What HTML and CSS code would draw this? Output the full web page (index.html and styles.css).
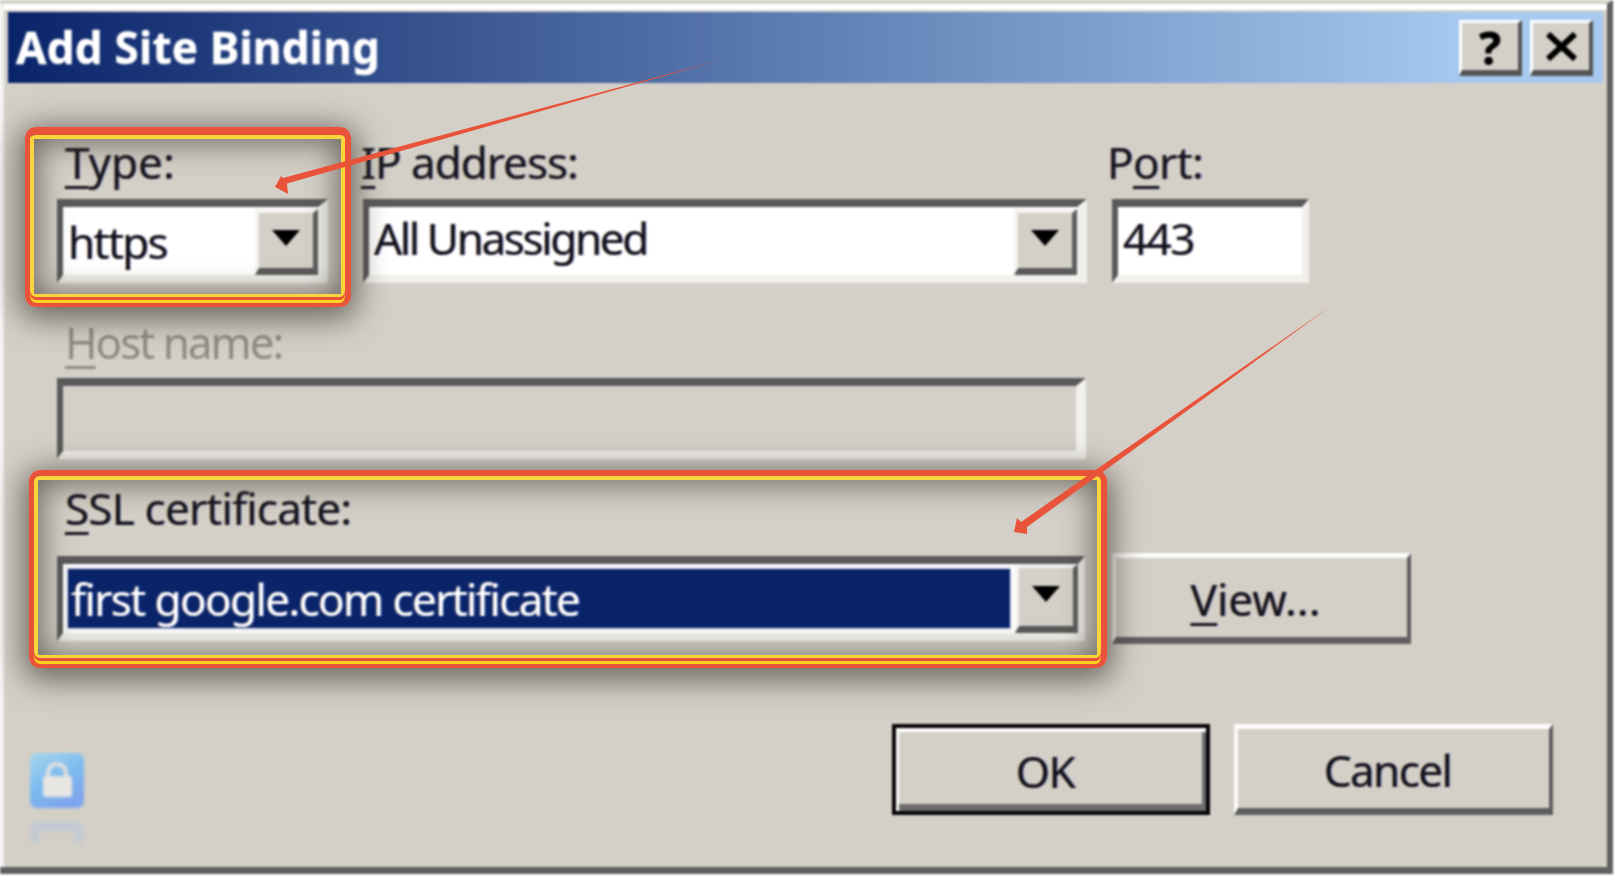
FILE: index.html
```html
<!DOCTYPE html>
<html lang="en">
<head>
<meta charset="utf-8">
<title>Add Site Binding</title>
<link rel="stylesheet" href="styles.css">
</head>
<body>
<div class="screen">
  <div class="dialog">
    <header class="titlebar">
      <h1 class="title">Add Site Binding</h1>
      <div class="caption-buttons">
        <div class="cap-btn cap-help">?</div>
        <div class="cap-btn">
          <svg class="cap-x" viewBox="0 0 33 29"><path d="M3 2 L30 27 M30 2 L3 27"/></svg>
        </div>
      </div>
    </header>
    <main class="form">
      <section class="row-top">
        <div class="field f-type">
          <label class="lbl"><u>T</u>ype:</label>
          <div class="sunken combo">
            <span class="value v-https">https</span>
            <span class="drop"><i class="tri"></i></span>
          </div>
        </div>
        <div class="field f-ip">
          <label class="lbl"><u>I</u>P address:</label>
          <div class="sunken combo">
            <span class="value v-ip">All Unassigned</span>
            <span class="drop"><i class="tri"></i></span>
          </div>
        </div>
        <div class="field f-port">
          <label class="lbl">P<u>o</u>rt:</label>
          <div class="sunken combo port-box"><span class="value">443</span></div>
        </div>
      </section>
      <section class="row-host">
        <label class="lbl lbl-off"><u>H</u>ost name:</label>
        <div class="sunken host-input"></div>
      </section>
      <section class="row-ssl">
        <label class="lbl"><u>S</u>SL certificate:</label>
        <div class="ssl-line">
          <div class="sunken combo ssl-combo">
            <span class="value selected">first google.com certificate</span>
            <span class="drop"><i class="tri"></i></span>
          </div>
          <button class="btn btn-view"><u>V</u>iew...</button>
        </div>
      </section>
      <footer class="row-actions">
        <div class="lock-wrap">
          <svg class="lock" viewBox="0 0 56 57">
            <defs>
              <linearGradient id="lockBg" x1="0" y1="0" x2="0.5" y2="1">
                <stop offset="0" stop-color="#a9d6ec"/>
                <stop offset="0.55" stop-color="#7cbcf0"/>
                <stop offset="1" stop-color="#7ea6ee"/>
              </linearGradient>
            </defs>
            <rect x="1" y="1" width="54" height="55" rx="7" fill="url(#lockBg)"/>
            <path d="M19 26 v-5 a9 9 0 0 1 18 0 v5" fill="none" stroke="#e4e2de" stroke-width="4"/>
            <rect x="14" y="24" width="29" height="21" rx="3" fill="#e8e6e2"/>
          </svg>
          <svg class="lock-shadow" viewBox="0 0 56 24">
            <path d="M2 22 V6 Q2 1 8 1 H48 Q54 1 54 6 V22 H46 V10 H10 V22 Z" fill="#a9bde4"/>
          </svg>
        </div>
        <div class="actions">
          <button class="btn btn-default">OK</button>
          <button class="btn btn-cancel">Cancel</button>
        </div>
      </footer>
    </main>
  </div>
  <div class="mark mark-type"></div>
  <div class="mark mark-ssl"></div>
  <svg class="arrows" viewBox="0 0 1617 880">
    <polygon class="arrow" points="724,59 287,183.5 288,194 275,187 281,176 283,178"/>
    <polygon class="arrow" points="1331,306 1027,527 1027,534 1014,532 1017,518 1021,522"/>
  </svg>
</div>
</body>
</html>
```

FILE: styles.css
```css
* { box-sizing: border-box; }
html, body { margin: 0; padding: 0; }
body { background: #fff; font-family: "Noto Sans", "Open Sans", sans-serif; }

.screen {
  position: relative;
  width: 1617px;
  height: 880px;
  overflow: hidden;
  background: #fff;
}

.dialog {
  width: 1613px;
  height: 874px;
  background: #d4d0c8;
  border-top: 4px solid #d4d0c8;
  border-right: 6px solid #5f5f5f;
  border-bottom: 7px solid #5f5f5f;
  padding: 8px 4px 0 8px;
  box-shadow: inset 5px 0 0 -1px #f2f1ee, inset 0 6px 0 #fff;
  filter: blur(1px);
}

.titlebar {
  height: 71px;
  display: flex;
  justify-content: space-between;
  align-items: flex-start;
  background: linear-gradient(90deg, #0a246a 0%, #a6caf0 92%);
  padding: 9px 10px 0 8px;
}
.title {
  margin: 0;
  color: #fff;
  font-size: 44px;
  font-weight: 700;
  line-height: 52px;
  letter-spacing: 0.25px;
  -webkit-text-stroke: 0.4px #fff;
}
.caption-buttons { display: flex; gap: 8px; margin-top: -1px; }
.cap-btn {
  width: 63px;
  height: 56px;
  display: flex;
  align-items: center;
  justify-content: center;
  background: #d4d0c8;
  border-style: solid;
  border-width: 3px 4px 6px 3px;
  border-color: #fff #555 #555 #fff;
  color: #000;
}
.cap-help { font-size: 46px; font-weight: 800; line-height: 1; }
.cap-x { width: 33px; height: 29px; }
.cap-x path { fill: none; stroke: #000; stroke-width: 6; }

.form { padding: 58px 0 0 49px; color: #000; }

.lbl {
  display: block;
  height: 50px;
  margin-bottom: 8px;
  font-size: 44px;
  line-height: 50px;
  letter-spacing: -0.8px;
  color: #14141e;
  white-space: nowrap;
  text-shadow: -1px 0 rgba(200, 120, 0, .35), 1px 0 rgba(0, 40, 200, .35);
}
.lbl-off { color: #8f8c86; text-shadow: none; margin-left: 8px; letter-spacing: -2px; margin-bottom: 11px; }
.lbl u, .btn u { text-underline-offset: 7px; text-decoration-thickness: 3px; }

.row-top { display: flex; }
.row-top .lbl { line-height: 42px; }
.f-type { width: 271px; margin-right: 35px; }
.f-ip { width: 724px; margin-right: 25px; }
.f-port { width: 197px; }
.f-type .lbl { margin-left: 8px; letter-spacing: 0; }
.f-ip .lbl { margin-left: -2px; letter-spacing: -1px; }
.f-port .lbl { margin-left: -5px; letter-spacing: -0.6px; }

.sunken {
  height: 84px;
  border-style: solid;
  border-width: 8px 10px 8px 6px;
  border-color: #5a5a5a #f1f0ed #f1f0ed #5a5a5a;
  background: #fff;
}
.port-box { border-right-width: 7px; }
.combo { display: flex; align-items: stretch; }
.value {
  flex: 1;
  min-width: 0;
  padding: 0 0 0 5px;
  font-size: 44px;
  line-height: 62px;
  letter-spacing: -1.6px;
  color: #10101c;
  white-space: nowrap;
  text-shadow: -1px 0 rgba(200, 120, 0, .35), 1px 0 rgba(0, 40, 200, .35);
}
.v-https { line-height: 70px; }
.v-ip { letter-spacing: -2.35px; }
.drop {
  flex: none;
  width: 63px;
  margin-top: 2px;
  display: flex;
  align-items: center;
  justify-content: center;
  background: #d4d0c8;
  border-style: solid;
  border-width: 4px 5px 7px 4px;
  border-color: #f4f3f0 #5f5f5f #5a5a5a #f4f3f0;
}
.tri {
  display: block;
  width: 0;
  height: 0;
  border-left: 14px solid transparent;
  border-right: 14px solid transparent;
  border-top: 16px solid #000;
  margin-top: -6px;
}

.row-host { margin-top: 34px; }
.host-input { width: 1029px; height: 81px; background: #d4d0c8; }

.row-ssl { margin-top: 24px; }
.row-ssl .lbl { margin-left: 8px; margin-bottom: 20px; }
.ssl-line { display: flex; align-items: center; gap: 27px; }
.ssl-combo { width: 1028px; height: 85px; border-right-width: 7px; }
.selected {
  flex: 1;
  margin: 5px 5px 5px 5px;
  padding-left: 3px;
  background: #0a246a;
  color: #fff;
  outline: 2px solid #dfe4f2;
  line-height: 61px;
  overflow: hidden;
  text-shadow: -1px 0 rgba(255, 170, 90, .35), 1px 0 rgba(120, 170, 255, .35);
}
.ssl-combo .drop { margin-top: 0; }

.btn {
  display: flex;
  align-items: center;
  justify-content: center;
  padding: 2px 12px 0 0;
  font: inherit;
  font-size: 44px;
  letter-spacing: -1.6px;
  color: #10101c;
  background: #d4d0c8;
  border-style: solid;
  border-width: 5px 4px 7px 4px;
  border-color: #fbfbf9 #5f5f5f #5f5f5f #fbfbf9;
  text-shadow: -1px 0 rgba(200, 120, 0, .35), 1px 0 rgba(0, 40, 200, .35);
}
.btn-view { width: 299px; height: 91px; letter-spacing: 0; }

.row-actions {
  margin: 80px 50px 0 -28px;
  display: flex;
  justify-content: space-between;
  align-items: flex-start;
}
.actions { display: flex; gap: 24px; }
.btn-default, .btn-cancel { width: 318px; height: 91px; }
.btn-cancel { width: 319px; }
.btn-default {
  border: 4px solid #050505;
  box-shadow: inset 3px 4px 0 #fbfbf9, inset -4px -7px 0 #6d6d6d;
}

.lock-wrap { margin-top: 28px; width: 56px; }
.lock { display: block; width: 56px; height: 57px; filter: blur(1px); }
.lock-shadow { display: block; width: 56px; height: 24px; margin-top: 12px; opacity: .4; filter: blur(2px); }

.mark {
  position: absolute;
  border-style: solid;
  border-color: #e8533a;
  border-radius: 11px;
  box-shadow:
    inset 0 -3px 0 #fbd31f,
    inset 0 -6px 0 #e8533a,
    inset 0 0 0 4px #f8d53a,
    inset 0 -9px 0 #f8d53a,
    inset 0 0 30px 8px rgba(60, 55, 45, .68),
    0 6px 30px 6px rgba(60, 55, 45, .68);
  pointer-events: none;
}
.mark-type { left: 25px; top: 127px; width: 326px; height: 180px; border-width: 8px 6px 4px 5px; }
.mark-ssl { left: 29px; top: 470px; width: 1078px; height: 198px; border-width: 6px 6px 4px 5px; }

.arrows { position: absolute; inset: 0; width: 1617px; height: 880px; pointer-events: none; }
.arrow { fill: #e8533a; }
```
